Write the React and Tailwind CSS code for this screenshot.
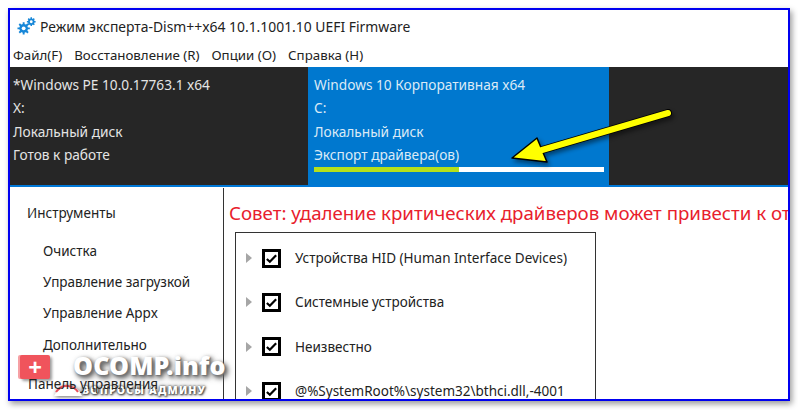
const font = { fontFamily: '"Noto Sans", sans-serif' };

const GearIcon = () => (
  <svg width="19" height="19" viewBox="0 0 20 20" className="mb-[4px] shrink-0">
    <g fill="#1787d8">
      <circle cx="7" cy="13" r="4.6" />
      <circle cx="15" cy="6" r="3.4" />
      <g stroke="#1787d8" strokeWidth="2">
        <path d="M7 6.5v13M.5 13h13M2.4 8.4l9.2 9.2M11.6 8.4l-9.2 9.2" />
        <path strokeWidth="1.6" d="M15 1.4v9.2M10.4 6h9.2M11.8 2.8l6.4 6.4M18.2 2.8l-6.4 6.4" />
      </g>
    </g>
    <circle cx="7" cy="13" r="2" fill="#fff" />
    <circle cx="15" cy="6" r="1.5" fill="#fff" />
  </svg>
);

const Tile = ({ lines, active, progress }) => (
  <div className={`flex flex-col pt-[6px] text-[13.7px] leading-[23.4px] ${active ? "w-[301px] bg-[#0078cf] pl-[6px] text-[#dbeaf6]" : "w-[298px] pl-[3px] text-[#e4e4e4]"}`}>
    {lines.map((l) => (
      <div key={l} className="whitespace-nowrap">{l}</div>
    ))}
    {progress && (
      <div className="h-[5px] w-[290px] bg-white">
        <div className="h-full w-[145px] bg-[#b5e01c]" />
      </div>
    )}
  </div>
);

const TreeRow = ({ label }) => (
  <div className="flex h-[44.3px] items-center">
    <div className="ml-[10px] h-0 w-0 border-y-[5px] border-l-[6px] border-y-transparent border-l-[#a6a6a6]" />
    <div className="ml-[10px] flex h-[19px] w-[19px] items-center justify-center border-[3px] border-black">
      <svg width="13" height="13" viewBox="0 0 14 14">
        <path d="M2 7.5l3.2 3L12 3.5" fill="none" stroke="#000" strokeWidth="2.4" />
      </svg>
    </div>
    <span className="ml-[14px] whitespace-nowrap text-[13.5px] text-[#222]">{label}</span>
  </div>
);

const navItems = ["Очистка", "Управление загрузкой", "Управление Appx", "Дополнительно"];

export default function App() {
  return (
    <div className="h-[410px] w-[798px] overflow-hidden bg-white pl-[8px] pt-[8px]" style={font}>
      <div className="relative flex h-[393px] w-[782px] flex-col overflow-hidden border-2 border-[#0000f0] bg-white shadow-[2px_3px_6px_rgba(0,0,0,0.4)]">
        {/* Title bar */}
        <div className="flex h-[34px] shrink-0 items-center pl-[7px]">
          <GearIcon />
          <span className="ml-[4px] whitespace-nowrap text-[13.9px] text-[#222]">
            Режим эксперта-Dism++x64 10.1.1001.10 UEFI Firmware
          </span>
        </div>

        {/* Menu */}
        <div className="flex h-[23px] shrink-0 items-center gap-[12px] pl-[3px] pt-[1px] text-[13.3px] text-[#222]">
          <span>Файл(F)</span>
          <span>Восстановление (R)</span>
          <span>Опции (O)</span>
          <span>Справка (H)</span>
        </div>

        {/* Images */}
        <div className="flex h-[118px] shrink-0 bg-[#262626]">
          <Tile lines={["*Windows PE 10.0.17763.1 x64", "X:", "Локальный диск", "Готов к работе"]} />
          <Tile active progress lines={["Windows 10 Корпоративная x64", "C:", "Локальный диск", "Экспорт драйвера(ов)"]} />
        </div>
        <div className="h-[2px] shrink-0 bg-[#0078d7]" />

        {/* Body */}
        <div className="flex min-h-0 flex-1 pt-[1px]">
          <div className="w-[214px] shrink-0 border-r border-[#333]">
            <div className="pl-[17px] pt-[15px] text-[13.5px] leading-[20px] text-[#222]">Инструменты</div>
            <div className="flex flex-col pl-[33px] pt-[13px] text-[13.5px] leading-[31.2px] text-[#222]">
              {navItems.map((n) => (
                <div key={n} className="whitespace-nowrap">{n}</div>
              ))}
            </div>
            <div className="relative z-10 pl-[18px] pt-[13px] text-[13.5px] leading-[20px] text-[#222]">Панель управления</div>
          </div>
          <div className="min-w-0 flex-1 overflow-hidden">
            <div className="whitespace-nowrap pl-[5px] pt-[11px] text-[18.7px] leading-[28px] text-[#e8202c]">
              Совет: удаление критических драйверов может привести к отказу
            </div>
            <div className="ml-[11px] mt-[5px] h-[200px] w-[361px] border border-[#333] pt-[3px]">
              <TreeRow label="Устройства HID (Human Interface Devices)" />
              <TreeRow label="Системные устройства" />
              <TreeRow label="Неизвестно" />
              <TreeRow label="@%SystemRoot%\system32\bthci.dll,-4001" />
            </div>
          </div>
        </div>

        {/* Arrow annotation */}
        <svg className="absolute left-[490px] top-[90px] drop-shadow-[2px_3px_2px_rgba(0,0,0,0.45)]" width="190" height="80" viewBox="0 0 190 80">
          <path d="M42 50 L168 13" stroke="#000" strokeWidth="8" strokeLinecap="round" />
          <path d="M12 58 L37 38 L47 62 Z" fill="#ffff00" stroke="#000" strokeWidth="1.5" strokeLinejoin="round" />
          <path d="M42 50 L168 13" stroke="#ffff00" strokeWidth="6" strokeLinecap="round" />
        </svg>

        {/* Watermark */}
        <div className="absolute left-[10px] top-[345px] flex h-[44px] w-[210px] items-start">
          <div className="flex h-[24px] w-[30px] items-center justify-center rounded-[2px] bg-[#f0545c] shadow-[-2px_0_0_#f6a0a4,2px_2px_3px_rgba(0,0,0,0.4)]">
            <span className="text-[24px] font-bold leading-none text-white">+</span>
          </div>
          <div className="ml-[23px] flex flex-col">
            <span className="whitespace-nowrap text-[25px] font-black leading-[20px] tracking-[0.2px] text-white [text-shadow:1px_1px_1px_#777,2px_2px_4px_#555,3px_3px_6px_#777]">
              OCOMP.info
            </span>
            <span className="ml-[9px] mt-[9px] whitespace-nowrap text-[10.5px] font-black leading-[12px] tracking-[1.2px] text-white [text-shadow:0_0_2px_#444,1px_1px_2px_#444,0_0_4px_#666]">
              ВОПРОСЫ АДМИНУ
            </span>
          </div>
          <svg className="absolute left-[33px] top-[28px] drop-shadow-[1px_1px_2px_rgba(0,0,0,0.6)]" width="30" height="14" viewBox="0 0 30 14">
            <path d="M1 13 Q6 1 15 2 Q25 3 29 13 Z" fill="#fff" />
            <path d="M3 9 Q8 2 15 3 Q22 4 25 9" fill="none" stroke="#e8505a" strokeWidth="2" />
          </svg>
        </div>
      </div>
    </div>
  );
}
